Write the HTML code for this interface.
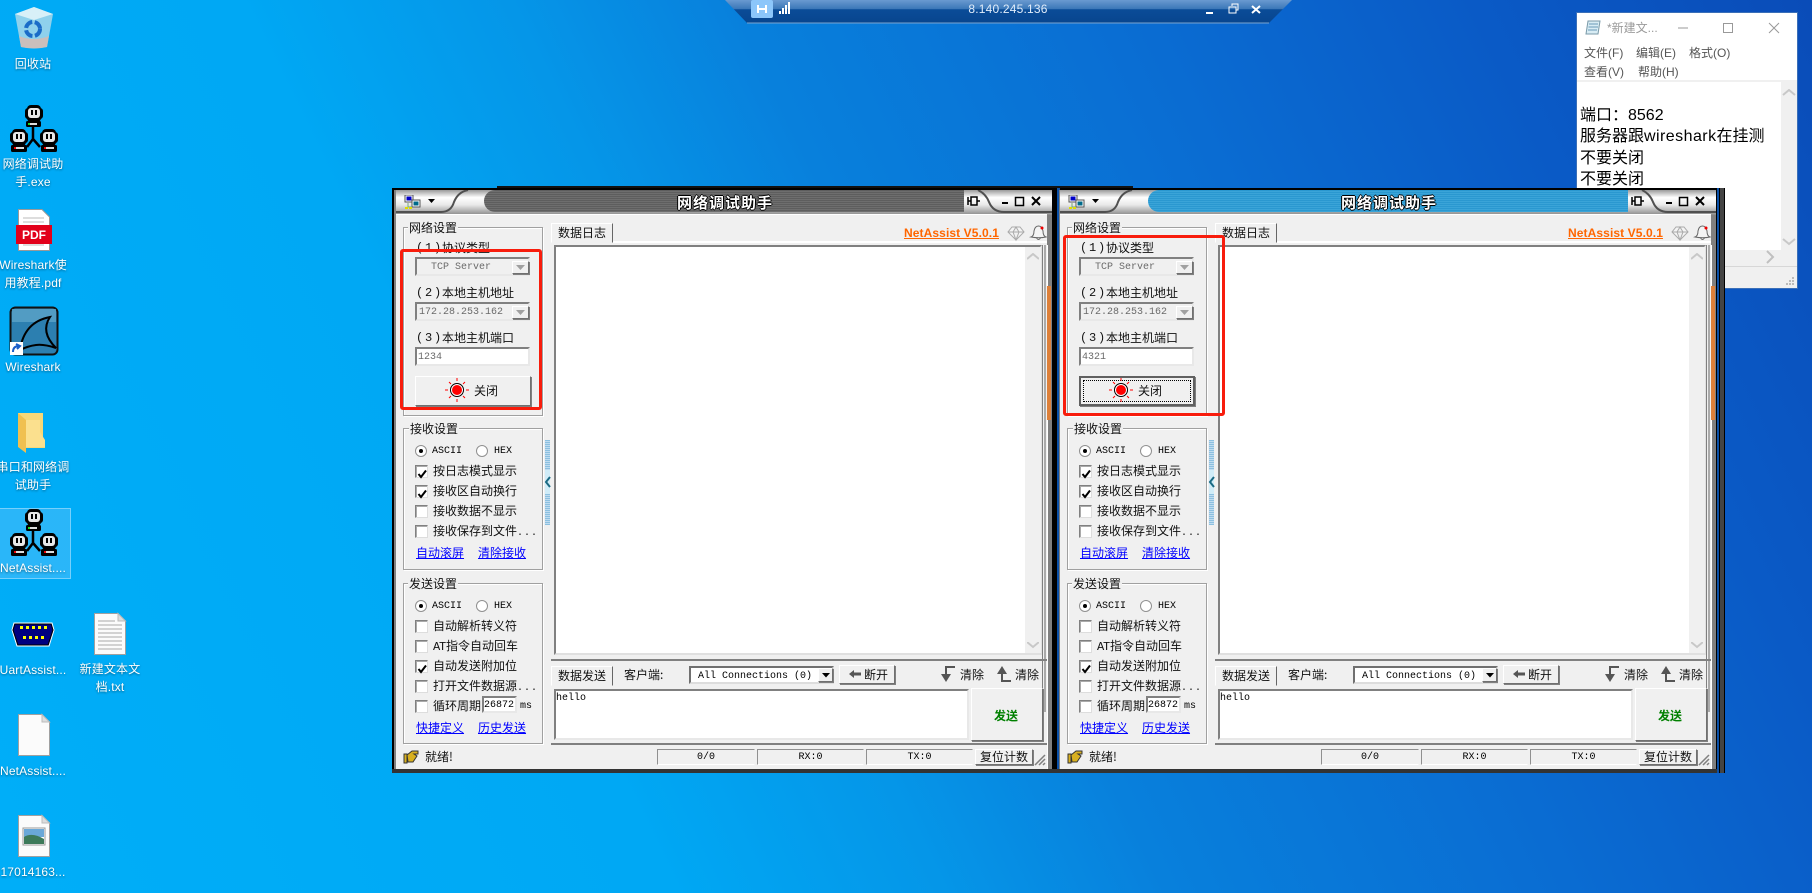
<!DOCTYPE html>
<html><head><meta charset="utf-8"><title>Desktop</title>
<style>
*{box-sizing:border-box}
html,body{margin:0;padding:0;width:1812px;height:893px;overflow:hidden}
body{position:relative;background:linear-gradient(64deg,#00aef8 0%,#00a8f4 30%,#0596e8 42%,#0880dc 52%,#0a6cd2 70%,#0a5ac6 85%,#0a4cb8 100%);font-family:"Liberation Sans","Noto Sans CJK SC",sans-serif}
.a{position:absolute}
.l{position:absolute;width:110px;text-align:center;color:#fff;font:12px/18px "Liberation Sans","Noto Sans CJK SC",sans-serif;text-shadow:0 1px 2px rgba(0,0,0,.45);white-space:nowrap;letter-spacing:.15px}
.w{position:absolute;top:188px;height:585px;background:#000;overflow:hidden}
.c{position:absolute;left:4px;top:27px;width:651px;height:554px;background:#f0f0f0}
.t{position:absolute;white-space:nowrap;font:12px/14px "WenQuanYi Zen Hei","Noto Sans CJK SC",sans-serif;color:#111}
.m{position:absolute;white-space:nowrap;font:10px/16px "Liberation Mono",monospace;color:#000}
.n{position:absolute;white-space:nowrap;font:12px/16px "Liberation Mono",monospace;color:#111;letter-spacing:1.8px}
.e{font:10px/14px "Liberation Mono",monospace;letter-spacing:1px}
.g{position:absolute;border:1px solid #a0a0a0;box-shadow:inset 1px 1px 0 #fff,1px 1px 0 #fff}
.s{position:absolute;background:#fff;border:2px solid;border-color:#808080 #e8e8e8 #e8e8e8 #808080}
.d{background:#f0f0f0}
.b{position:absolute;background:#f0f0f0;border:1px solid;border-color:#fff #707070 #707070 #fff;box-shadow:1px 1px 0 #808080}
.k{position:absolute;width:13px;height:13px;background:#fff;border:1px solid;border-color:#808080 #ddd #ddd #808080;box-shadow:inset 1px 1px 0 #aaa}
.r{position:absolute;width:12px;height:12px;border-radius:50%;background:#fff;border:1px solid #909090}
.r.on:after{content:"";position:absolute;left:3px;top:3px;width:4px;height:4px;border-radius:50%;background:#000}
.u{color:#0000ff;text-decoration:underline}
.red{position:absolute;border:3px solid #f81c0c;border-radius:3px;z-index:5}
.pill{position:absolute;left:92px;top:2px;width:480px;height:22px;border-radius:11px 0 0 11px;background:repeating-linear-gradient(180deg,#5e5e5e 0,#5e5e5e 1px,#6e6e6e 1px,#6e6e6e 2px)}
.blue{background:repeating-linear-gradient(180deg,#2a98d0 0,#2a98d0 1px,#3aa4d8 1px,#3aa4d8 2px)}
.tt{position:absolute;left:285px;top:7px;color:#fff;font:bold 15px/16px "WenQuanYi Zen Hei","Noto Sans CJK SC",sans-serif;letter-spacing:1px;text-shadow:1px 0 0 #000,-1px 0 0 #000,0 1px 0 #000,0 -1px 0 #000}
.st{position:absolute;top:561px;height:16px;border:1px solid;border-color:#909090 #f0f0f0 #fff #909090;text-align:center;font:10px/16px "Liberation Mono",monospace;color:#000}
</style></head><body>
<svg width="0" height="0" style="position:absolute">
<defs>
<linearGradient id="tg" x1="0" y1="0" x2="0" y2="1"><stop offset="0" stop-color="#9a9a9a"/><stop offset=".3" stop-color="#fff"/><stop offset=".6" stop-color="#e8e8e8"/><stop offset="1" stop-color="#8a8a8a"/></linearGradient>
<g id="mon"><rect x="2" y="0" width="14" height="17" rx="4" fill="#000"/><rect x="0" y="3" width="18" height="11" rx="3" fill="#000"/><rect x="3" y="3" width="12" height="10" rx="3" fill="#e8e8e8"/><rect x="6" y="5" width="2" height="5" fill="#000"/><rect x="10" y="5" width="2" height="5" fill="#000"/></g>
<g id="net"><path d="M23 20V34L17 42M23 34L30 42" stroke="#000" stroke-width="2.5" fill="none"/><use href="#mon" x="15" y="0"/><rect x="16" y="16" width="15" height="6" rx="1.5" fill="#000"/><rect x="18" y="18" width="9" height="2" fill="#ddd"/><rect x="18" y="18" width="2" height="2" fill="#22dd22"/><use href="#mon" x="0" y="24"/><rect x="1" y="40" width="16" height="7" rx="1.5" fill="#000"/><rect x="4" y="42" width="10" height="2" fill="#ddd"/><rect x="4" y="42" width="2" height="2" fill="#e00"/><use href="#mon" x="30" y="24"/><rect x="31" y="40" width="16" height="7" rx="1.5" fill="#000"/><rect x="34" y="42" width="10" height="2" fill="#ddd"/><rect x="34" y="42" width="2" height="2" fill="#e00"/></g>
<g id="doc"><path d="M.5.5H24L31.5 8V41.5H.5Z" fill="#fbfbfb" stroke="#a0a0a0"/><path d="M24 .5V8H31.5Z" fill="#ddd" stroke="#bbb"/></g>
<g id="led"><circle cx="12" cy="12" r="6.5" fill="#fff" stroke="#000"/><circle cx="12" cy="12" r="5" fill="#ff0000"/><path d="M12 0V3M12 21V24M0 12H3M21 12H24M4 4L6 6M18 18L20 20M20 4L18 6M6 18L4 20" stroke="#f00"/></g>
<path id="chk" d="M2.5 6L5 9L10 2.5" fill="none" stroke="#000" stroke-width="2"/>
<path id="dn" d="M0 0H9L4.5 5Z" fill="#a0a0a0"/>
<path id="cu" d="M0 6L6 1L12 6" fill="none" stroke="#c8c8c8" stroke-width="2"/>
<path id="cd" d="M0 0L6 5L12 0" fill="none" stroke="#c8c8c8" stroke-width="2"/>
<g id="ni"><rect x="1" y="0" width="8" height="7" fill="#fff" stroke="#555"/><rect x="2.500" y="1.500" width="5" height="4" fill="#0000c8"/><rect x="8" y="5" width="8" height="7" fill="#fff" stroke="#555"/><rect x="9.500" y="6.500" width="5" height="4" fill="#006a8a"/><path d="M4 8V12H8" stroke="#7a7" fill="none"/><rect x="1" y="12" width="3" height="2" fill="#dd0"/><rect x="5" y="12" width="3" height="2" fill="#dd0"/></g>
<g id="bar"><path d="M3 5V13M3 9H6M6 5H12V13H6ZM12 9H15" stroke="#000" stroke-width="1.500" fill="none"/><path d="M37 11H43" stroke="#000" stroke-width="2"/><rect x="50.500" y="5.500" width="8" height="8" fill="none" stroke="#000" stroke-width="1.500"/><path d="M67 5L75 13M75 5L67 13" stroke="#000" stroke-width="2"/></g>
<g id="gem"><path d="M5 2H13L17 7L9 15L1 7ZM1 7H17M6 7L9 15L12 7L9 2L6 7" fill="#f4f4f4" stroke="#aaa"/><path d="M24 12Q27 11 27 6Q28 1 31.500 1Q35 1 36 6Q36 11 39 12Q32 13.500 24 12ZM29.500 13Q31.500 16 33.500 13" fill="#f4f4f4" stroke="#666"/><circle cx="35" cy="3" r="1.500" fill="#e00"/></g>
</defs>
</svg>

<!-- desktop icons -->
<svg class="a" style="left:0;top:0" width="160" height="893" viewBox="0 0 160 893">
<g><path d="M15 14L34 7L53 14L47 47Q34 50 21 47Z" fill="#a8d8ea" opacity=".85"/><path d="M15 14L34 20L53 14L34 7Z" fill="#d8f0f8"/><path d="M19 36Q34 42 49 36L47 47Q34 50 21 47Z" fill="#e4b8a8" opacity=".7"/><circle cx="33" cy="29" r="7" fill="none" stroke="#1a6cc8" stroke-width="4" stroke-dasharray="9 2.500"/></g>
<use href="#net" x="10" y="105"/>
<g><path d="M18.500 209.500H42L49.500 217V250.500H18.500Z" fill="#fff" stroke="#999"/><path d="M23 218H44M23 222H44M23 240H44M23 245H44" stroke="#bbb"/><rect x="16" y="225" width="36" height="19" fill="#e2001a"/></g>
<g><rect x="10.500" y="307.500" width="47" height="47" rx="5" fill="#2c7fb0" stroke="#111" stroke-width="2"/><path d="M12 309H56V322H12Z" fill="#5ca4c8" opacity=".8"/><path d="M20 350Q24 322 50 317Q40 332 56 348Q44 344 36 345Q28 346 20 350Z" fill="#2c7fb0" stroke="#000" stroke-width="2"/><rect x="10" y="342" width="13" height="13" fill="#fff"/><path d="M13 352Q13 346 19 346M16 344L20 346L17 349" stroke="#1a5ec8" stroke-width="2" fill="none"/></g>
<g><path d="M18 413H43V440H45V448H25L18 440Z" fill="#f8d878"/><path d="M18 413L26 420V453L18 447Z" fill="#f0c050"/><path d="M26 420V447H45V440L40 432V420Z" fill="#fbe08e"/></g>
<rect x="-1" y="508.500" width="71.500" height="70" fill="#5ec4fa" fill-opacity=".45" stroke="#8ed8fb" stroke-opacity=".8"/>
<use href="#net" x="10" y="509"/>
<g><path d="M14 623H52L54 630L49 646H17L12 630Z" fill="#000080" stroke="#fff"/><path d="M15 624H51L53 630L48 645H18L13 630Z" fill="none" stroke="#000" stroke-width="1"/><g fill="#ffff00"><rect x="20" y="626" width="3" height="3"/><rect x="26" y="626" width="3" height="3"/><rect x="32" y="626" width="3" height="3"/><rect x="38" y="626" width="3" height="3"/><rect x="44" y="626" width="3" height="3"/><rect x="23" y="636" width="3" height="3"/><rect x="29" y="636" width="3" height="3"/><rect x="35" y="636" width="3" height="3"/><rect x="41" y="636" width="3" height="3"/></g></g>
<g transform="translate(94,613)"><use href="#doc"/><path d="M4 8H21M4 12H28M4 16H28M4 20H28M4 24H28M4 28H28M4 32H28M4 36H28" stroke="#aaa"/></g>
<use href="#doc" x="18" y="714"/>
<g transform="translate(18,815)"><use href="#doc"/><rect x="5" y="13" width="22" height="17" fill="#fff" stroke="#999"/><rect x="6" y="14" width="20" height="8" fill="#6aa8d8"/><path d="M6 22Q14 17 26 24V29H6Z" fill="#3d7a5a"/></g>
<text x="34" y="239" text-anchor="middle" fill="#fff" font-family="Liberation Sans" font-weight="bold" font-size="12">PDF</text>
</svg>
<div class="l" style="left:-22px;top:55px">回收站</div>
<div class="l" style="left:-22px;top:156px;line-height:17.500px">网络调试助<br>手.exe</div>
<div class="l" style="left:-22px;top:257px;line-height:17.500px">Wireshark使<br>用教程.pdf</div>
<div class="l" style="left:-22px;top:358px">Wireshark</div>
<div class="l" style="left:-22px;top:458px">串口和网络调<br>试助手</div>
<div class="l" style="left:-22px;top:559px">NetAssist....</div>
<div class="l" style="left:-22px;top:661px">UartAssist...</div>
<div class="l" style="left:55px;top:661px;line-height:17.500px">新建文本文<br>档.txt</div>
<div class="l" style="left:-22px;top:762px">NetAssist....</div>
<div class="l" style="left:-22px;top:863px">17014163...</div>

<!-- remote bar -->
<svg class="a" style="left:720px;top:0" width="580" height="26" viewBox="0 0 580 26">
<defs><linearGradient id="rb" x1="0" y1="0" x2="0" y2="1"><stop offset="0" stop-color="#6a9ad0"/><stop offset=".38" stop-color="#3c78b8"/><stop offset=".42" stop-color="#0a4c98"/><stop offset="1" stop-color="#08458e"/></linearGradient></defs>
<path d="M5 0H572L549 23H27Z" fill="url(#rb)"/><path d="M27 23H549" stroke="#7aa4d0"/>
<rect x="31" y="0" width="22" height="18" rx="2" fill="#8cc6fa"/><path d="M38 9H46M38 5V13M46 5V13" stroke="#fff" stroke-width="2"/>
<rect x="59" y="11" width="2" height="3" fill="#fff"/><rect x="62" y="8" width="2" height="6" fill="#fff"/><rect x="65" y="5" width="2" height="9" fill="#fff"/><rect x="68" y="2" width="2" height="12" fill="#fff"/>
<path d="M486 13H493" stroke="#fff" stroke-width="2"/><rect x="509" y="7" width="7" height="6" fill="none" stroke="#fff"/><path d="M512 6V4H518V10H516" fill="none" stroke="#fff"/><path d="M532 6L540 13M540 6L532 13" stroke="#fff" stroke-width="2"/>
</svg>
<div class="a" style="left:958px;top:2px;width:100px;text-align:center;font:12px/15px 'Liberation Sans',sans-serif;color:#e0ecfa;letter-spacing:.2px">8.140.245.136</div>

<!-- notepad -->
<div class="a" style="left:1577px;top:13px;width:220px;height:275px;background:#f0f0f0;box-shadow:0 0 0 1px #3a6fb8">
<div class="a" style="left:0;top:0;width:220px;height:67px;background:#fff"></div>
<svg class="a" style="left:8px;top:5px" width="18" height="18" viewBox="0 0 18 18"><path d="M3 3H15L13 16H1Z" fill="#d8ecf4" stroke="#7a9aa8"/><path d="M4 6H13M3.500 9H13M3 12H12" stroke="#6a9ab8"/></svg>
<div class="a" style="left:30px;top:7px;font:12px/16px 'Liberation Sans','Noto Sans CJK SC',sans-serif;color:#9a9a9a">*新建文...</div>
<svg class="a" style="left:100px;top:5px" width="110" height="20" viewBox="0 0 110 20"><path d="M1 10H11" stroke="#999"/><rect x="46.500" y="5.500" width="9" height="9" fill="none" stroke="#999"/><path d="M92 5L102 15M102 5L92 15" stroke="#999"/></svg>
<div class="a" style="left:7px;top:32px;font:12px/16px 'Liberation Sans','Noto Sans CJK SC',sans-serif;color:#555">文件(F)</div>
<div class="a" style="left:59px;top:32px;font:12px/16px 'Liberation Sans','Noto Sans CJK SC',sans-serif;color:#555">编辑(E)</div>
<div class="a" style="left:112px;top:32px;font:12px/16px 'Liberation Sans','Noto Sans CJK SC',sans-serif;color:#555">格式(O)</div>
<div class="a" style="left:7px;top:51px;font:12px/16px 'Liberation Sans','Noto Sans CJK SC',sans-serif;color:#555">查看(V)</div>
<div class="a" style="left:61px;top:51px;font:12px/16px 'Liberation Sans','Noto Sans CJK SC',sans-serif;color:#555">帮助(H)</div>
<div class="a" style="left:0;top:69px;width:204px;height:168px;background:#fff"></div>
<div class="a" style="left:3px;top:92px;font:16px/21.300px 'Liberation Sans','Noto Sans CJK SC',sans-serif;color:#000;white-space:nowrap">端口：8562<br>服务器跟<span style="letter-spacing:.45px">wireshark</span>在挂测<br>不要关闭<br>不要关闭</div>
<svg class="a" style="left:205px;top:76px" width="14" height="160" viewBox="0 0 14 160"><use href="#cu" x="1"/><use href="#cd" x="1" y="150"/></svg>
<svg class="a" style="left:188px;top:237px" width="10" height="14" viewBox="0 0 10 14"><path d="M2 1L8 7L2 13" fill="none" stroke="#c0c0c0" stroke-width="2"/></svg>
<div class="a" style="left:0;top:253px;width:220px;height:1px;background:#d7d7d7"></div>
<svg class="a" style="left:208px;top:263px" width="10" height="10"><path d="M7 1h2v2h-2zM4 4h2v2h-2zM7 4h2v2h-2zM1 7h2v2h-2zM4 7h2v2h-2zM7 7h2v2h-2z" fill="#bbb"/></svg>
</div>

<!-- background window behind -->
<div class="a" style="left:497px;top:186px;width:636px;height:3px;background:#111"></div>

<!-- WINDOW 1 -->
<div class="w" style="left:392px;width:664px">
<div class="a" style="left:2px;top:2px;width:658px;height:579px;background:#808080"></div>
<div class="a" style="left:0;top:581px;width:664px;height:4px;background:#333"></div>
<svg class="a" style="left:4px;top:2px" width="656" height="25" viewBox="0 0 656 25"><rect width="656" height="25" fill="url(#tg)"/><path d="M0 22H45Q55 22 58 12Q62 2 72 0" fill="none" stroke="#505050" stroke-width="2"/><path d="M582 0Q590 4 593 12Q597 22 608 22H656" fill="none" stroke="#505050" stroke-width="2"/></svg>
<div class="pill"></div><div class="tt">网络调试助手</div>
<svg class="a" style="left:12px;top:7px" width="36" height="15" viewBox="0 0 36 15"><use href="#ni"/><path d="M24 4H31L27.500 8Z" fill="#000"/></svg>
<svg class="a" style="left:573px;top:4px" width="84" height="20" viewBox="0 0 84 20"><use href="#bar"/></svg>
<div class="c"></div>
<div class="a" style="left:4px;top:26px;width:651px;height:1px;background:#fff"></div>
<div class="g" style="left:11px;top:39px;width:140px;height:189px"></div>
<div class="t d" style="left:16px;top:33px;padding:0 1px">网络设置</div>
<div class="n" style="left:24px;top:52px">(1)</div><div class="t" style="left:50px;top:53px">协议类型</div>
<div class="s d" style="left:23px;top:69px;width:115px;height:19px"></div><div class="m" style="left:39px;top:72px;color:#6a6a6a">TCP Server</div>
<div class="b" style="left:120px;top:73px;width:17px;height:13px"></div><svg class="a" style="left:124px;top:77px" width="9" height="5"><use href="#dn"/></svg>
<div class="n" style="left:24px;top:97px">(2)</div><div class="t" style="left:50px;top:98px">本地主机地址</div>
<div class="s d" style="left:23px;top:114px;width:115px;height:19px"></div><div class="m" style="left:27px;top:117px;color:#6a6a6a">172.28.253.162</div>
<div class="b" style="left:120px;top:118px;width:17px;height:13px"></div><svg class="a" style="left:124px;top:122px" width="9" height="5"><use href="#dn"/></svg>
<div class="n" style="left:24px;top:142px">(3)</div><div class="t" style="left:50px;top:143px">本地主机端口</div>
<div class="s" style="left:23px;top:159px;width:115px;height:19px"></div><div class="m" style="left:26px;top:162px;color:#6a6a6a">1234</div>
<div class="b" style="left:23px;top:188px;width:116px;height:30px"></div><svg class="a" style="left:53px;top:190px" width="24" height="24"><use href="#led"/></svg><div class="t" style="left:82px;top:196px">关闭</div>
<div class="g" style="left:11px;top:240px;width:140px;height:142px"></div>
<div class="t d" style="left:17px;top:234px;padding:0 1px">接收设置</div>
<div class="r on" style="left:23px;top:257px"></div><div class="m" style="left:40px;top:256px">ASCII</div><div class="r" style="left:84px;top:257px"></div><div class="m" style="left:102px;top:256px">HEX</div>
<div class="k" style="left:23px;top:277px"><svg width="11" height="11"><use href="#chk"/></svg></div><div class="t" style="left:41px;top:276px">按日志模式显示</div>
<div class="k" style="left:23px;top:297px"><svg width="11" height="11"><use href="#chk"/></svg></div><div class="t" style="left:41px;top:296px">接收区自动换行</div>
<div class="k" style="left:23px;top:317px"></div><div class="t" style="left:41px;top:316px">接收数据不显示</div>
<div class="k" style="left:23px;top:337px"></div><div class="t" style="left:41px;top:336px">接收保存到文件<span class="e">...</span></div>
<div class="t u" style="left:24px;top:358px">自动滚屏</div><div class="t u" style="left:86px;top:358px">清除接收</div>
<div class="g" style="left:11px;top:395px;width:140px;height:161px"></div>
<div class="t d" style="left:16px;top:389px;padding:0 1px">发送设置</div>
<div class="r on" style="left:23px;top:412px"></div><div class="m" style="left:40px;top:411px">ASCII</div><div class="r" style="left:84px;top:412px"></div><div class="m" style="left:102px;top:411px">HEX</div>
<div class="k" style="left:23px;top:432px"></div><div class="t" style="left:41px;top:431px">自动解析转义符</div>
<div class="k" style="left:23px;top:452px"></div><div class="t" style="left:41px;top:451px"><span style="font:12px 'Liberation Mono',monospace;letter-spacing:-1.2px;margin-right:1px">AT</span>指令自动回车</div>
<div class="k" style="left:23px;top:472px"><svg width="11" height="11"><use href="#chk"/></svg></div><div class="t" style="left:41px;top:471px">自动发送附加位</div>
<div class="k" style="left:23px;top:492px"></div><div class="t" style="left:41px;top:491px">打开文件数据源<span class="e">...</span></div>
<div class="k" style="left:23px;top:512px"></div><div class="t" style="left:41px;top:511px">循环周期</div>
<div class="s" style="left:90px;top:508px;width:35px;height:17px"></div><div class="m" style="left:92px;top:510px">26872</div><div class="m" style="left:128px;top:511px">ms</div>
<div class="t u" style="left:24px;top:533px">快捷定义</div><div class="t u" style="left:86px;top:533px">历史发送</div>
<svg class="a" style="left:11px;top:562px" width="16" height="14" viewBox="0 0 16 14"><path d="M1 4H4V13H1ZM4 5L9 1H15V4H11L14 6L12 9L10 12H5Z" fill="#d8b020" stroke="#333"/></svg>
<div class="t" style="left:33px;top:562px">就绪!</div>
<div class="a" style="left:153px;top:252px;width:5px;height:85px;background:repeating-linear-gradient(180deg,#8cc0e0 0,#8cc0e0 1px,#c0dcf0 1px,#c0dcf0 2px)"></div>
<div class="a" style="left:153px;top:282px;width:5px;height:24px;background:#d0ecf8"></div>
<svg class="a" style="left:152px;top:287px" width="8" height="14"><path d="M6 2L2 7L6 12" fill="none" stroke="#1a6a84" stroke-width="2"/></svg>
<div class="t d" style="left:159px;top:35px;width:62px;height:20px;border:1px solid;border-color:#fff #666 #f0f0f0 #fff;padding:2px 0 0 6px">数据日志</div>
<div class="a" style="left:221px;top:53px;width:434px;height:2px;background:#fff"></div>
<div class="a" style="left:162px;top:57px;width:488px;height:410px;background:#fff;border:2px solid;border-color:#808080 #e0e0e0 #e0e0e0 #808080"></div>
<div class="a" style="left:633px;top:59px;width:16px;height:406px;background:#f0f0f0"></div>
<svg class="a" style="left:635px;top:65px" width="12" height="7"><use href="#cu"/></svg>
<svg class="a" style="left:635px;top:454px" width="12" height="7"><use href="#cd"/></svg>
<div class="a" style="left:650px;top:57px;width:1px;height:467px;background:#808080"></div>
<div class="a" style="left:652px;top:57px;width:2px;height:467px;background:#aaa"></div>
<div class="a" style="left:655px;top:57px;width:1px;height:524px;background:#fff"></div>
<div class="a" style="left:655px;top:98px;width:4px;height:134px;background:#dd803a"></div>
<div class="t" style="left:512px;top:38px;font:bold 12px/14px 'Liberation Sans',sans-serif;color:#ff6600;text-decoration:underline;letter-spacing:.1px">NetAssist V5.0.1</div>
<svg class="a" style="left:615px;top:37px" width="40" height="17" viewBox="0 0 40 17"><use href="#gem"/></svg>
<div class="a" style="left:159px;top:471px;width:496px;height:2px;background:#808080"></div>
<div class="t d" style="left:159px;top:478px;width:62px;height:20px;border:1px solid;border-color:#fff #666 #f0f0f0 #fff;padding:2px 0 0 6px">数据发送</div>
<div class="t" style="left:232px;top:480px">客户端:</div>
<div class="s" style="left:297px;top:478px;width:145px;height:18px;border-color:#707070 #ddd #ddd #707070"></div><div class="m" style="left:306px;top:481px">All Connections (0)</div>
<div class="b" style="left:426px;top:480px;width:15px;height:14px"></div><svg class="a" style="left:430px;top:485px" width="8" height="5"><path d="M0 0H8L4 4.500Z" fill="#000"/></svg>
<div class="b" style="left:447px;top:477px;width:56px;height:19px"></div><svg class="a" style="left:457px;top:481px" width="12" height="10"><path d="M0 5L5 1V3.500H12V6.500H5V9Z" fill="#555"/></svg><div class="t" style="left:472px;top:480px">断开</div>
<svg class="a" style="left:548px;top:477px" width="16" height="18" viewBox="0 0 16 18"><path d="M15 2H6V10" fill="none" stroke="#555" stroke-width="2"/><path d="M1 9H11L6 17Z" fill="#555"/></svg><div class="t" style="left:568px;top:480px">清除</div>
<svg class="a" style="left:604px;top:477px" width="16" height="18" viewBox="0 0 16 18"><path d="M15 16H6V8" fill="none" stroke="#555" stroke-width="2"/><path d="M1 9H11L6 1Z" fill="#555"/></svg><div class="t" style="left:623px;top:480px">清除</div>
<div class="s" style="left:162px;top:501px;width:415px;height:51px"></div><div class="m" style="left:164px;top:503px">hello</div>
<div class="b" style="left:579px;top:500px;width:72px;height:53px"></div><div class="t" style="left:602px;top:521px;color:#008000;font-weight:bold">发送</div>
<div class="a" style="left:159px;top:555px;width:496px;height:2px;background:#808080"></div>
<div class="st" style="left:265px;width:98px">0/0</div><div class="st" style="left:365px;width:107px">RX:0</div><div class="st" style="left:474px;width:107px">TX:0</div>
<div class="b t" style="left:583px;top:561px;width:58px;height:16px;text-align:center;line-height:14px;color:#111">复位计数</div>
<svg class="a" style="left:641px;top:565px" width="13" height="13"><path d="M12 2L2 12M12 6L6 12M12 10L10 12" stroke="#808080" stroke-width="1.500"/></svg>
<div class="red" style="left:8px;top:61px;width:142px;height:161px"></div>
</div>

<!-- WINDOW 2 -->
<div class="w" style="left:1056px;width:669px">
<div class="a" style="left:1px;top:0;width:3px;height:582px;background:#0a50a8"></div>
<div class="a" style="left:3px;top:2px;width:657px;height:579px;background:#808080"></div>
<div class="a" style="left:0;top:581px;width:661px;height:4px;background:#333"></div>
<div class="a" style="left:661px;top:0;width:2px;height:585px;background:#0a50a8"></div>
<div class="a" style="left:664px;top:0;width:4px;height:585px;background:#444"></div>
<svg class="a" style="left:4px;top:2px" width="656" height="25" viewBox="0 0 656 25"><rect width="656" height="25" fill="url(#tg)"/><path d="M0 22H45Q55 22 58 12Q62 2 72 0" fill="none" stroke="#505050" stroke-width="2"/><path d="M582 0Q590 4 593 12Q597 22 608 22H656" fill="none" stroke="#505050" stroke-width="2"/></svg>
<div class="pill blue"></div><div class="tt">网络调试助手</div>
<svg class="a" style="left:12px;top:7px" width="36" height="15" viewBox="0 0 36 15"><use href="#ni"/><path d="M24 4H31L27.500 8Z" fill="#000"/></svg>
<svg class="a" style="left:573px;top:4px" width="84" height="20" viewBox="0 0 84 20"><use href="#bar"/></svg>
<div class="c"></div>
<div class="a" style="left:4px;top:26px;width:651px;height:1px;background:#fff"></div>
<div class="g" style="left:11px;top:39px;width:140px;height:189px"></div>
<div class="t d" style="left:16px;top:33px;padding:0 1px">网络设置</div>
<div class="n" style="left:24px;top:52px">(1)</div><div class="t" style="left:50px;top:53px">协议类型</div>
<div class="s d" style="left:23px;top:69px;width:115px;height:19px"></div><div class="m" style="left:39px;top:72px;color:#6a6a6a">TCP Server</div>
<div class="b" style="left:120px;top:73px;width:17px;height:13px"></div><svg class="a" style="left:124px;top:77px" width="9" height="5"><use href="#dn"/></svg>
<div class="n" style="left:24px;top:97px">(2)</div><div class="t" style="left:50px;top:98px">本地主机地址</div>
<div class="s d" style="left:23px;top:114px;width:115px;height:19px"></div><div class="m" style="left:27px;top:117px;color:#6a6a6a">172.28.253.162</div>
<div class="b" style="left:120px;top:118px;width:17px;height:13px"></div><svg class="a" style="left:124px;top:122px" width="9" height="5"><use href="#dn"/></svg>
<div class="n" style="left:24px;top:142px">(3)</div><div class="t" style="left:50px;top:143px">本地主机端口</div>
<div class="s" style="left:23px;top:159px;width:115px;height:19px"></div><div class="m" style="left:26px;top:162px;color:#6a6a6a">4321</div>
<div class="b" style="left:23px;top:188px;width:116px;height:30px;border:2px solid #606060"></div><div class="a" style="left:27px;top:192px;width:108px;height:22px;border:1px dotted #000"></div><svg class="a" style="left:53px;top:190px" width="24" height="24"><use href="#led"/></svg><div class="t" style="left:82px;top:196px">关闭</div>
<div class="g" style="left:11px;top:240px;width:140px;height:142px"></div>
<div class="t d" style="left:17px;top:234px;padding:0 1px">接收设置</div>
<div class="r on" style="left:23px;top:257px"></div><div class="m" style="left:40px;top:256px">ASCII</div><div class="r" style="left:84px;top:257px"></div><div class="m" style="left:102px;top:256px">HEX</div>
<div class="k" style="left:23px;top:277px"><svg width="11" height="11"><use href="#chk"/></svg></div><div class="t" style="left:41px;top:276px">按日志模式显示</div>
<div class="k" style="left:23px;top:297px"><svg width="11" height="11"><use href="#chk"/></svg></div><div class="t" style="left:41px;top:296px">接收区自动换行</div>
<div class="k" style="left:23px;top:317px"></div><div class="t" style="left:41px;top:316px">接收数据不显示</div>
<div class="k" style="left:23px;top:337px"></div><div class="t" style="left:41px;top:336px">接收保存到文件<span class="e">...</span></div>
<div class="t u" style="left:24px;top:358px">自动滚屏</div><div class="t u" style="left:86px;top:358px">清除接收</div>
<div class="g" style="left:11px;top:395px;width:140px;height:161px"></div>
<div class="t d" style="left:16px;top:389px;padding:0 1px">发送设置</div>
<div class="r on" style="left:23px;top:412px"></div><div class="m" style="left:40px;top:411px">ASCII</div><div class="r" style="left:84px;top:412px"></div><div class="m" style="left:102px;top:411px">HEX</div>
<div class="k" style="left:23px;top:432px"></div><div class="t" style="left:41px;top:431px">自动解析转义符</div>
<div class="k" style="left:23px;top:452px"></div><div class="t" style="left:41px;top:451px"><span style="font:12px 'Liberation Mono',monospace;letter-spacing:-1.2px;margin-right:1px">AT</span>指令自动回车</div>
<div class="k" style="left:23px;top:472px"><svg width="11" height="11"><use href="#chk"/></svg></div><div class="t" style="left:41px;top:471px">自动发送附加位</div>
<div class="k" style="left:23px;top:492px"></div><div class="t" style="left:41px;top:491px">打开文件数据源<span class="e">...</span></div>
<div class="k" style="left:23px;top:512px"></div><div class="t" style="left:41px;top:511px">循环周期</div>
<div class="s" style="left:90px;top:508px;width:35px;height:17px"></div><div class="m" style="left:92px;top:510px">26872</div><div class="m" style="left:128px;top:511px">ms</div>
<div class="t u" style="left:24px;top:533px">快捷定义</div><div class="t u" style="left:86px;top:533px">历史发送</div>
<svg class="a" style="left:11px;top:562px" width="16" height="14" viewBox="0 0 16 14"><path d="M1 4H4V13H1ZM4 5L9 1H15V4H11L14 6L12 9L10 12H5Z" fill="#d8b020" stroke="#333"/></svg>
<div class="t" style="left:33px;top:562px">就绪!</div>
<div class="a" style="left:153px;top:252px;width:5px;height:85px;background:repeating-linear-gradient(180deg,#8cc0e0 0,#8cc0e0 1px,#c0dcf0 1px,#c0dcf0 2px)"></div>
<div class="a" style="left:153px;top:282px;width:5px;height:24px;background:#d0ecf8"></div>
<svg class="a" style="left:152px;top:287px" width="8" height="14"><path d="M6 2L2 7L6 12" fill="none" stroke="#1a6a84" stroke-width="2"/></svg>
<div class="t d" style="left:159px;top:35px;width:62px;height:20px;border:1px solid;border-color:#fff #666 #f0f0f0 #fff;padding:2px 0 0 6px">数据日志</div>
<div class="a" style="left:221px;top:53px;width:434px;height:2px;background:#fff"></div>
<div class="a" style="left:162px;top:57px;width:488px;height:410px;background:#fff;border:2px solid;border-color:#808080 #e0e0e0 #e0e0e0 #808080"></div>
<div class="a" style="left:633px;top:59px;width:16px;height:406px;background:#f0f0f0"></div>
<svg class="a" style="left:635px;top:65px" width="12" height="7"><use href="#cu"/></svg>
<svg class="a" style="left:635px;top:454px" width="12" height="7"><use href="#cd"/></svg>
<div class="a" style="left:650px;top:57px;width:1px;height:467px;background:#808080"></div>
<div class="a" style="left:652px;top:57px;width:2px;height:467px;background:#aaa"></div>
<div class="a" style="left:655px;top:57px;width:1px;height:524px;background:#fff"></div>
<div class="a" style="left:655px;top:98px;width:4px;height:134px;background:#dd803a"></div>
<div class="t" style="left:512px;top:38px;font:bold 12px/14px 'Liberation Sans',sans-serif;color:#ff6600;text-decoration:underline;letter-spacing:.1px">NetAssist V5.0.1</div>
<svg class="a" style="left:615px;top:37px" width="40" height="17" viewBox="0 0 40 17"><use href="#gem"/></svg>
<div class="a" style="left:159px;top:471px;width:496px;height:2px;background:#808080"></div>
<div class="t d" style="left:159px;top:478px;width:62px;height:20px;border:1px solid;border-color:#fff #666 #f0f0f0 #fff;padding:2px 0 0 6px">数据发送</div>
<div class="t" style="left:232px;top:480px">客户端:</div>
<div class="s" style="left:297px;top:478px;width:145px;height:18px;border-color:#707070 #ddd #ddd #707070"></div><div class="m" style="left:306px;top:481px">All Connections (0)</div>
<div class="b" style="left:426px;top:480px;width:15px;height:14px"></div><svg class="a" style="left:430px;top:485px" width="8" height="5"><path d="M0 0H8L4 4.500Z" fill="#000"/></svg>
<div class="b" style="left:447px;top:477px;width:56px;height:19px"></div><svg class="a" style="left:457px;top:481px" width="12" height="10"><path d="M0 5L5 1V3.500H12V6.500H5V9Z" fill="#555"/></svg><div class="t" style="left:472px;top:480px">断开</div>
<svg class="a" style="left:548px;top:477px" width="16" height="18" viewBox="0 0 16 18"><path d="M15 2H6V10" fill="none" stroke="#555" stroke-width="2"/><path d="M1 9H11L6 17Z" fill="#555"/></svg><div class="t" style="left:568px;top:480px">清除</div>
<svg class="a" style="left:604px;top:477px" width="16" height="18" viewBox="0 0 16 18"><path d="M15 16H6V8" fill="none" stroke="#555" stroke-width="2"/><path d="M1 9H11L6 1Z" fill="#555"/></svg><div class="t" style="left:623px;top:480px">清除</div>
<div class="s" style="left:162px;top:501px;width:415px;height:51px"></div><div class="m" style="left:164px;top:503px">hello</div>
<div class="b" style="left:579px;top:500px;width:72px;height:53px"></div><div class="t" style="left:602px;top:521px;color:#008000;font-weight:bold">发送</div>
<div class="a" style="left:159px;top:555px;width:496px;height:2px;background:#808080"></div>
<div class="st" style="left:265px;width:98px">0/0</div><div class="st" style="left:365px;width:107px">RX:0</div><div class="st" style="left:474px;width:107px">TX:0</div>
<div class="b t" style="left:583px;top:561px;width:58px;height:16px;text-align:center;line-height:14px;color:#111">复位计数</div>
<svg class="a" style="left:641px;top:565px" width="13" height="13"><path d="M12 2L2 12M12 6L6 12M12 10L10 12" stroke="#808080" stroke-width="1.500"/></svg>
<div class="red" style="left:7px;top:47px;width:162px;height:181px"></div>
</div>
</body></html>
